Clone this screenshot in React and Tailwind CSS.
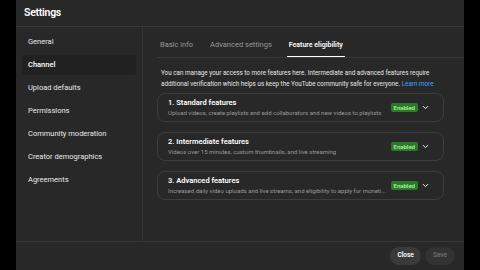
import { ChevronDown } from "lucide-react";

const navItems = [
  "General",
  "Channel",
  "Upload defaults",
  "Permissions",
  "Community moderation",
  "Creator demographics",
  "Agreements",
];

const features = [
  {
    title: "1. Standard features",
    desc: "Upload videos, create playlists and add collaborators and new videos to playlists",
  },
  {
    title: "2. Intermediate features",
    desc: "Videos over 15 minutes, custom thumbnails, and live streaming",
  },
  {
    title: "3. Advanced features",
    desc: "Increased daily video uploads and live streams, and eligibility to apply for moneti...",
  },
];

export default function App() {
  return (
    <div
      className="w-[480px] h-[270px] bg-black flex overflow-hidden"
      style={{ fontFamily: "Roboto, 'Liberation Sans', sans-serif" }}
    >
      <div className="ml-[16px] w-[448px] h-full bg-[#282828] flex flex-col text-white">
        <div className="h-[27px] shrink-0 border-b border-[#383838] flex items-center px-[8px]">
          <h1 className="text-[10.5px] font-semibold tracking-tight">Settings</h1>
        </div>

        <div className="flex flex-1 min-h-0">
          <div className="w-[127px] shrink-0 border-r border-[#333] px-[6px] pt-[5px] flex flex-col gap-[3px]">
            {navItems.map((item) => (
              <div
                key={item}
                className={`h-[20px] flex items-center px-[6px] rounded-[3px] text-[7.5px] text-[#e8e8e8] ${
                  item === "Channel" ? "bg-[#212121] text-white font-medium" : ""
                }`}
              >
                {item}
              </div>
            ))}
          </div>

          <div className="flex-1 min-w-0 flex flex-col pl-[14px] pr-[20px]">
            <div className="flex items-end h-[31px] border-b border-[#383838] -mr-[20px] pl-[1px] gap-[13px]">
              <div className="px-[2px] pb-[7px] text-[7.5px] text-[#9a9a9a]">Basic info</div>
              <div className="px-[2px] pb-[7px] text-[7.5px] text-[#9a9a9a]">Advanced settings</div>
              <div className="px-[2px] pb-[6px] text-[7px] font-semibold text-white border-b-[1.5px] border-white">
                Feature eligibility
              </div>
            </div>

            <p className="mt-[10px] px-[4px] text-[6.3px] leading-[11px] text-[#e6e6e6]">
              You can manage your access to more features here. Intermediate and advanced features require
              additional verification which helps us keep the YouTube community safe for everyone.{" "}
              <span className="text-[#3ea6ff]">Learn more</span>
            </p>

            <div className="mt-[3px] flex flex-col gap-[10px]">
              {features.map((f) => (
                <div
                  key={f.title}
                  className="h-[29px] rounded-[8px] border border-[#3d3d3d] flex items-center pl-[10px] pr-[13px]"
                >
                  <div className="flex-1 min-w-0">
                    <div className="text-[7.5px] font-semibold leading-[10px] text-white">{f.title}</div>
                    <div className="text-[6px] leading-[9px] text-[#9a9a9a] whitespace-nowrap overflow-hidden">
                      {f.desc}
                    </div>
                  </div>
                  <span className="ml-[4px] h-[9px] px-[3px] flex items-center rounded-[2px] bg-[#2a7a2a] text-[6px] text-[#b8f5a8] font-medium">
                    Enabled
                  </span>
                  <ChevronDown className="ml-[3px] w-[9px] h-[9px] text-white" strokeWidth={2.5} />
                </div>
              ))}
            </div>
          </div>
        </div>

        <div className="h-[29px] shrink-0 border-t border-[#383838] flex items-center justify-end gap-[4px] pr-[9px]">
          <button className="h-[18px] px-[7px] rounded-full bg-[#3a3a3a] text-[6.5px] font-semibold text-white">
            Close
          </button>
          <button className="h-[18px] px-[8px] rounded-full bg-[#333333] text-[6.5px] font-semibold text-[#6b6b6b]">
            Save
          </button>
        </div>
      </div>
    </div>
  );
}
